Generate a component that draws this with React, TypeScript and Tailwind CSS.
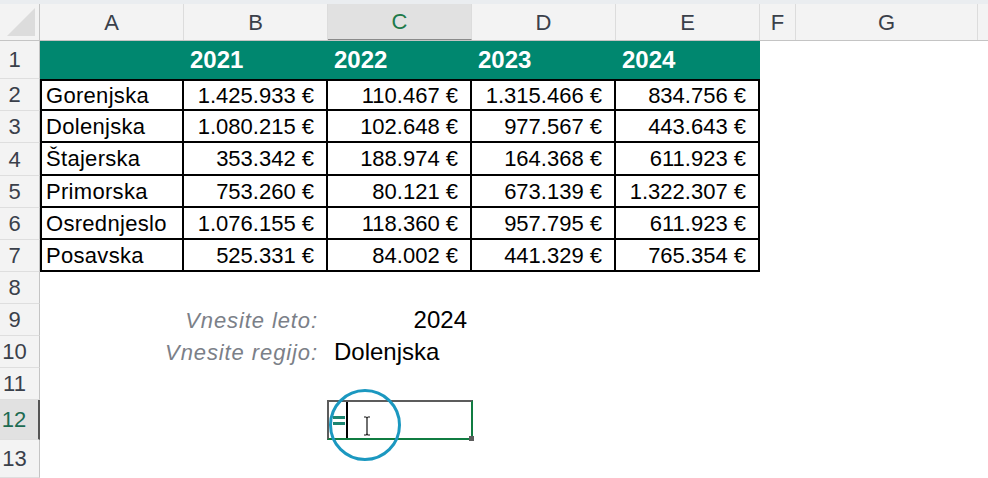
import React from "react";

const COLS = [
  { key: "A", w: "w-[144px]" },
  { key: "B", w: "w-[144px]" },
  { key: "C", w: "w-[144px]" },
  { key: "D", w: "w-[144px]" },
  { key: "E", w: "w-[144px]" },
  { key: "F", w: "w-[36px]" },
  { key: "G", w: "w-[182px]" },
];

const DATA: [string, string, string, string, string][] = [
  ["Gorenjska", "1.425.933 €", "110.467 €", "1.315.466 €", "834.756 €"],
  ["Dolenjska", "1.080.215 €", "102.648 €", "977.567 €", "443.643 €"],
  ["Štajerska", "353.342 €", "188.974 €", "164.368 €", "611.923 €"],
  ["Primorska", "753.260 €", "80.121 €", "673.139 €", "1.322.307 €"],
  ["Osrednjeslo", "1.076.155 €", "118.360 €", "957.795 €", "611.923 €"],
  ["Posavska", "525.331 €", "84.002 €", "441.329 €", "765.354 €"],
];

const ROW_H = ["h-[32px]", "h-[32px]", "h-[33px]", "h-[32px]", "h-[32px]", "h-[32px]"];

function RowHead({ n, active }: { n: number; active?: boolean }) {
  return (
    <div
      className={
        "w-[40px] shrink-0 h-full flex items-center justify-center pr-[10px] text-[22px] border-b border-[#dedede] " +
        (active
          ? "bg-[#e1e1e1] border-r-2 border-r-[#555555] text-[#1d6b52]"
          : "bg-[#f3f3f3] border-r border-r-[#c4c4c4] text-[#3a404a]")
      }
    >
      {n}
    </div>
  );
}

export default function App() {
  return (
    <div className="w-[988px] h-[478px] overflow-hidden bg-white relative font-['Liberation_Sans',Arial,sans-serif] text-black">
      {/* top strip */}
      <div className="h-[4px] bg-[#eaedf0]" />
      {/* column headers */}
      <div className="flex h-[37px] bg-[#f3f3f3] border-b border-[#c4c4c4]">
        <div className="w-[40px] shrink-0 h-full border-r border-[#c4c4c4] flex items-end justify-end pr-[4px] pb-[4px]">
          <svg width="28" height="28" viewBox="0 0 28 28">
            <polygon points="28,0 28,28 0,28" fill="#dcdcdc" />
          </svg>
        </div>
        {COLS.map((c) => (
          <div
            key={c.key}
            className={
              c.w +
              " shrink-0 h-full flex items-center justify-center text-[22px] border-r border-[#dcdcdc] " +
              (c.key === "C" ? "bg-[#e1e1e1] text-[#1e7a4a] border-b border-b-[#8a8a8a]" : "text-[#3a404a]")
            }
          >
            {c.key}
          </div>
        ))}
        <div className="flex-1 h-full" />
      </div>

      {/* row 1 header */}
      <div className="flex h-[38px]">
        <RowHead n={1} />
        <div className="flex bg-[#00876f] text-white font-bold text-[24px] h-full">
          {["", "2021", "2022", "2023", "2024"].map((t, i) => (
            <div key={i} className="w-[144px] h-full flex items-center pl-[6px]">
              {t}
            </div>
          ))}
        </div>
      </div>

      {/* data rows */}
      {DATA.map((row, r) => (
        <div key={r} className={"flex " + ROW_H[r]}>
          <RowHead n={r + 2} />
          {row.map((v, i) => (
            <div
              key={i}
              className={
                "w-[144px] shrink-0 h-full flex items-center text-[22px] whitespace-nowrap border-black border-r-2 border-b-2 " +
                (i === 0 ? "border-l-2 pl-[4px] justify-start tracking-[0.3px] " : "justify-end pr-[12px] ") +
                (r === 0 ? "border-t-2" : "")
              }
            >
              {v}
            </div>
          ))}
        </div>
      ))}

      {/* row 8 */}
      <div className="flex h-[32px]">
        <RowHead n={8} />
      </div>
      {/* row 9 */}
      <div className="flex h-[32px]">
        <RowHead n={9} />
        <div className="w-[144px] shrink-0" />
        <div className="w-[144px] shrink-0 h-full flex items-center justify-end pr-[10px] whitespace-nowrap italic text-[22px] tracking-[0.9px] text-[#7b8088]">
          Vnesite leto:
        </div>
        <div className="w-[144px] shrink-0 h-full flex items-center justify-end pr-[5px] text-[24px]">
          2024
        </div>
      </div>
      {/* row 10 */}
      <div className="flex h-[32px]">
        <RowHead n={10} />
        <div className="w-[144px] shrink-0" />
        <div className="w-[144px] shrink-0 h-full flex items-center justify-end pr-[10px] whitespace-nowrap italic text-[22px] tracking-[0.9px] text-[#7b8088]">
          Vnesite regijo:
        </div>
        <div className="w-[144px] shrink-0 h-full flex items-center pl-[6px] text-[24px] whitespace-nowrap">
          Dolenjska
        </div>
      </div>
      {/* row 11 */}
      <div className="flex h-[32px]">
        <RowHead n={11} />
      </div>
      {/* row 12 */}
      <div className="flex h-[40px]">
        <RowHead n={12} active />
        <div className="w-[144px] shrink-0" />
        <div className="w-[144px] shrink-0" />
        <div className="w-[146px] shrink-0 h-full -ml-[1px] relative border-2 border-t-[#5c5c5c] border-l-[#5c5c5c] border-r-[#107c41] border-b-[#107c41]">
          <div className="absolute left-[4px] top-[14px] w-[12px] flex flex-col gap-[3px]">
            <div className="h-[3px] bg-[#1b8571]" />
            <div className="h-[3px] bg-[#1b8571]" />
          </div>
          <div className="absolute left-[17px] top-[0px] w-[1.5px] h-[36px] bg-black" />
          <svg className="absolute left-[34px] top-[14px]" width="8" height="20" viewBox="0 0 8 20">
            <path d="M1 1 H3 Q4 1 4 3 V17 Q4 19 3 19 H1 M7 1 H5 Q4 1 4 3 M4 17 Q4 19 5 19 H7" stroke="#111" strokeWidth="1.2" fill="none" />
          </svg>
          <div className="absolute -right-[3px] -bottom-[3px] w-[5px] h-[5px] bg-[#5c5c5c]" />
        </div>
      </div>
      {/* row 13 */}
      <div className="flex h-[38px]">
        <RowHead n={13} />
      </div>

      {/* highlight circle */}
      <div className="absolute left-[329px] top-[389px] w-[72px] h-[72px] rounded-full border-[3px] border-[#1b98c0]" />
    </div>
  );
}
